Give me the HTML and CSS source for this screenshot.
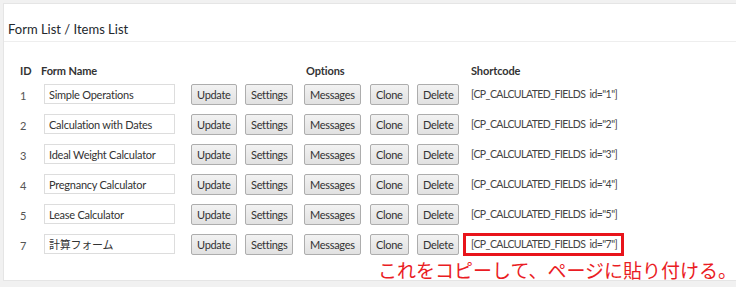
FILE: index.html
```html
<!DOCTYPE html>
<html lang="en">
  <head>
    <meta charset="UTF-8" />
    <meta name="viewport" content="width=device-width, initial-scale=1.0" />
    <title>Form List</title>
    <link rel="stylesheet" href="styles.css">
  </head>
  <body>
    <div class="postbox">
      <h3 class="hndle">Form List / Items List</h3>

      <div class="list">
        <div class="row head">
          <div>ID</div>
          <div>Form Name</div>
          <div></div>
          <div></div>
          <div class="opts">Options</div>
          <div></div>
          <div></div>
          <div>Shortcode</div>
        </div>

        <div class="row">
          <div class="id">1</div>
          <div><input class="name" type="text" value="Simple Operations"></div>
          <div><button>Update</button></div>
          <div><button>Settings</button></div>
          <div><button>Messages</button></div>
          <div><button>Clone</button></div>
          <div><button>Delete</button></div>
          <div class="code">[CP_CALCULATED_FIELDS id="1"]</div>
        </div>
        <div class="row">
          <div class="id">2</div>
          <div><input class="name" type="text" value="Calculation with Dates"></div>
          <div><button>Update</button></div>
          <div><button>Settings</button></div>
          <div><button>Messages</button></div>
          <div><button>Clone</button></div>
          <div><button>Delete</button></div>
          <div class="code">[CP_CALCULATED_FIELDS id="2"]</div>
        </div>
        <div class="row">
          <div class="id">3</div>
          <div><input class="name" type="text" value="Ideal Weight Calculator"></div>
          <div><button>Update</button></div>
          <div><button>Settings</button></div>
          <div><button>Messages</button></div>
          <div><button>Clone</button></div>
          <div><button>Delete</button></div>
          <div class="code">[CP_CALCULATED_FIELDS id="3"]</div>
        </div>
        <div class="row">
          <div class="id">4</div>
          <div><input class="name" type="text" value="Pregnancy Calculator"></div>
          <div><button>Update</button></div>
          <div><button>Settings</button></div>
          <div><button>Messages</button></div>
          <div><button>Clone</button></div>
          <div><button>Delete</button></div>
          <div class="code">[CP_CALCULATED_FIELDS id="4"]</div>
        </div>
        <div class="row">
          <div class="id">5</div>
          <div><input class="name" type="text" value="Lease Calculator"></div>
          <div><button>Update</button></div>
          <div><button>Settings</button></div>
          <div><button>Messages</button></div>
          <div><button>Clone</button></div>
          <div><button>Delete</button></div>
          <div class="code">[CP_CALCULATED_FIELDS id="5"]</div>
        </div>
        <div class="row">
          <div class="id">7</div>
          <div><input class="name" type="text" value="計算フォーム"></div>
          <div><button>Update</button></div>
          <div><button>Settings</button></div>
          <div><button>Messages</button></div>
          <div><button>Clone</button></div>
          <div><button>Delete</button></div>
          <div><span class="code marked">[CP_CALCULATED_FIELDS id="7"]</span></div>
        </div>
      </div>

      <div class="note">これをコピーして、ページに貼り付ける。</div>
    </div>
  </body>
</html>
```

FILE: styles.css
```css
body {
  margin: 0;
  background: #f1f1f1;
  font-family: Lato, "Noto Sans CJK JP", sans-serif;
  color: #333;
}

.postbox {
  position: relative;
  margin: 3px 0 0 3px;
  border: 1px solid #e5e5e5;
  border-right: none;
  background: #fff;
  padding-bottom: 21px;
}

.hndle {
  margin: 0;
  padding: 17px 4px 4px;
  font-size: 13px;
  line-height: 16px;
  font-weight: normal;
  color: #23282d;
  border-bottom: 1px solid #eee;
}

.list {
  margin-top: 19px;
  padding-left: 16px;
}

.row {
  display: grid;
  grid-template-columns: 21px 150px 54px 59px 66px 47px 54px auto;
  align-items: center;
  height: 30px;
  font-size: 11px;
}

.row.head {
  height: 18px;
  font-weight: bold;
  letter-spacing: -0.1px;
}

.opts {
  padding-left: 2px;
}

.id {
  color: #555;
  padding-top: 3px;
}

.name {
  display: block;
  box-sizing: border-box;
  width: 131px;
  height: 20px;
  margin: 0 0 0 3px;
  padding: 0 4px;
  border: 1px solid #ddd;
  font-family: Lato, "Noto Sans CJK JP", sans-serif;
  font-size: 11px;
  letter-spacing: -0.25px;
  color: #333;
}

button {
  display: block;
  box-sizing: border-box;
  height: 21px;
  padding: 0 5px;
  border: 1px solid #adadad;
  border-radius: 2px;
  background: linear-gradient(#f2f2f2, #e1e1e1);
  font-family: Lato, sans-serif;
  font-size: 11px;
  letter-spacing: -0.3px;
  color: #333;
}

.code {
  color: #444;
  font-size: 10.5px;
  letter-spacing: -0.55px;
  word-spacing: 2px;
}

.marked {
  display: inline-block;
  margin-left: -8px;
  padding: 1px 4px 1px 5px;
  border: 3px solid #e8141b;
  line-height: 15px;
}

.note {
  position: absolute;
  left: 374px;
  top: 257px;
  font-size: 19px;
  line-height: 19px;
  color: #ea1c24;
  white-space: nowrap;
}
```
